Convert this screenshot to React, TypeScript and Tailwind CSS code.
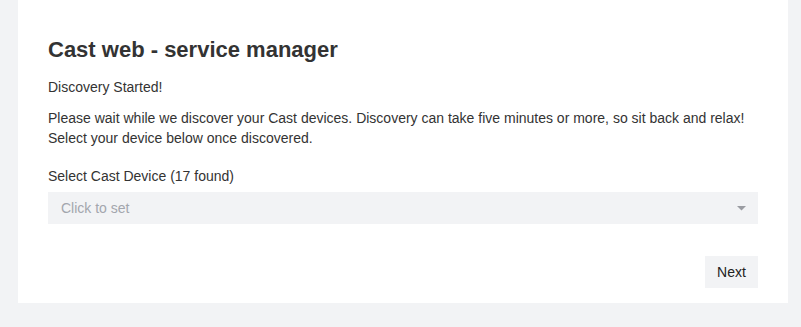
import React from "react";

export default function App() {
  return (
    <div className="w-[801px] h-[327px] bg-[#f2f3f5] overflow-hidden" style={{ fontFamily: '"Liberation Sans", Arial, sans-serif' }}>
      <div className="ml-[18px] w-[770px] h-[303px] bg-white px-[30px] pt-[36px] text-[#333333]">
        <h1 className="text-[22px] leading-[28px] font-bold">Cast web - service manager</h1>
        <p className="mt-[13px] text-[14px] leading-[20px]">Discovery Started!</p>
        <p className="mt-[11px] text-[14px] leading-[20px]">
          Please wait while we discover your Cast devices. Discovery can take five minutes or more, so sit back and relax!
          <br />
          Select your device below once discovered.
        </p>
        <div className="mt-[18px] text-[14px] leading-[20px]">Select Cast Device (17 found)</div>
        <div className="mt-[6px] h-[32px] bg-[#f2f3f5] flex items-center justify-between pl-[13px] pr-[12px]">
          <span className="text-[14px] text-[#a3a6ad]">Click to set</span>
          <svg width="9" height="5" viewBox="0 0 9 5" className="mt-[1px]">
            <path d="M0 0 L9 0 L4.5 4.5 Z" fill="#9a9ca2" />
          </svg>
        </div>
        <div className="mt-[32px] flex justify-end">
          <button className="h-[32px] w-[53px] bg-[#f2f3f5] text-[14px] text-[#222222] flex items-center justify-center">Next</button>
        </div>
      </div>
    </div>
  );
}
